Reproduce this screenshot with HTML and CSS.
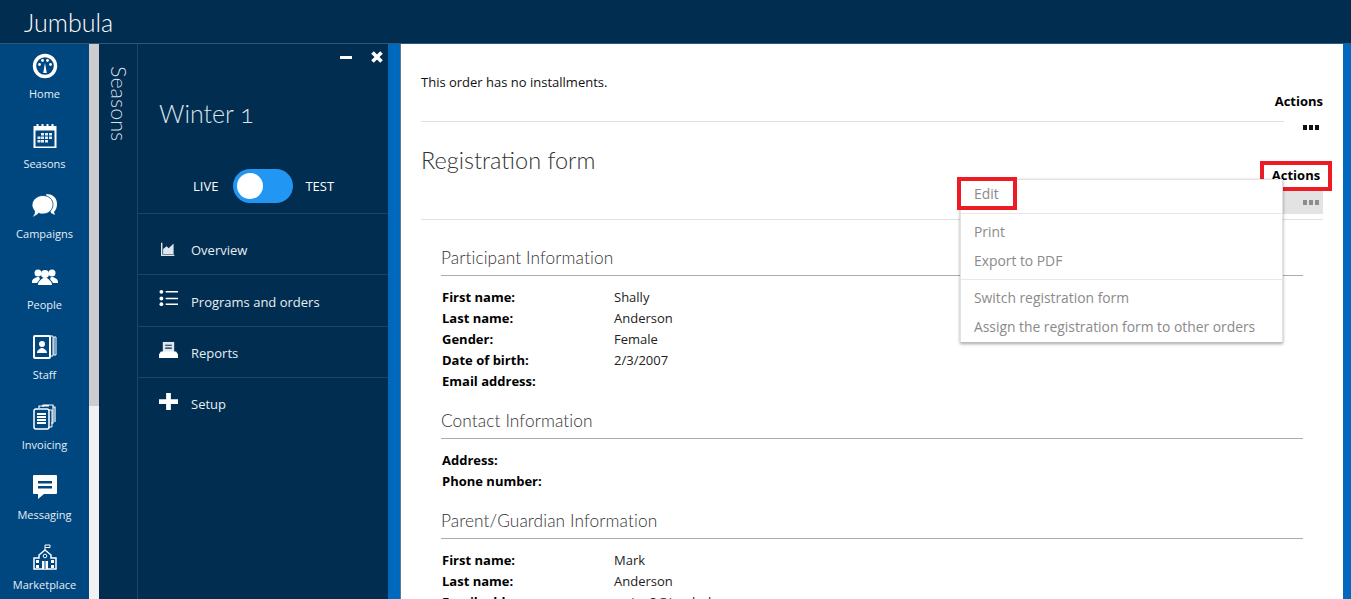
FILE: index.html
```html
<!DOCTYPE html>
<html lang="en">
<head>
<meta charset="utf-8">
<title>Jumbula</title>
<link rel="stylesheet" href="styles.css">
</head>
<body>
<header class="topbar"><span class="brand">Jumbula</span></header>
<div class="shell">
  <nav class="rail">
    <a class="rail-item"><svg class="rail-icon" viewBox="0 0 26 26"><circle cx="13" cy="13" r="10.500" fill="none" stroke="#fff" stroke-width="3.400"/><path d="M13 10l1.800 10h-3.600z" fill="#fff"/><circle cx="7.500" cy="11.500" r="1.400" fill="#fff"/><circle cx="10.500" cy="7.500" r="1.400" fill="#fff"/><circle cx="15.500" cy="7.500" r="1.400" fill="#fff"/><circle cx="18.500" cy="11.500" r="1.400" fill="#fff"/></svg><span>Home</span></a>
    <a class="rail-item"><svg class="rail-icon" viewBox="0 0 26 26"><path d="M1.500 3h3V1h2v2h3V1h2v2h3V1h2v2h3V1h2v2h3v22h-23z" fill="#fff"/><rect x="3.500" y="7.500" width="19" height="16" fill="#00477f"/><path d="M9 10h3v2.500H9zM13 10h3v2.500h-3zM17 10h3v2.500h-3zM5.500 13.500h3V16h-3zM9 13.500h3V16H9zM13 13.500h3V16h-3zM17 13.500h3V16h-3zM5.500 17h3v2.500h-3zM9 17h3v2.500H9zM13 17h3v2.500h-3z" fill="#fff" opacity=".9"/></svg><span>Seasons</span></a>
    <a class="rail-item"><svg class="rail-icon" viewBox="0 0 26 26"><path d="M14 1c6 0 11 3 11 10 0 3-1 6-3 8l1 3-4-2z" fill="#fff"/><path d="M11 2.500c6 0 10 4 10 9s-4 9.500-10 9.500c-2 0-3 0-4-1-2 2-5 4-7 4 2-2 3-4 2.500-6C1 16 0 14 0 12c0-5 5-9.500 11-9.500z" fill="#fff" stroke="#00477f" stroke-width=".8"/></svg><span>Campaigns</span></a>
    <a class="rail-item"><svg class="rail-icon" viewBox="0 0 26 26"><circle cx="6" cy="9" r="3.500" fill="#fff"/><circle cx="20" cy="9" r="3.500" fill="#fff"/><path d="M0 18c0-3 3-4 5-5h2l1 2-3 4H0zM26 18c0-3-3-4-5-5h-2l-1 2 3 4h5z" fill="#fff"/><circle cx="13" cy="10" r="4" fill="#fff"/><path d="M6 21c0-4 4-6 5-7h4c1 1 5 3 5 7z" fill="#fff"/></svg><span>People</span></a>
    <a class="rail-item"><svg class="rail-icon" viewBox="0 0 26 26"><path d="M18 2h3v20h-3zM22 3h2v18h-2z" fill="none" stroke="#fff" stroke-width="1"/><rect x="2" y="2" width="16" height="22" rx="1" fill="none" stroke="#fff" stroke-width="2"/><circle cx="10" cy="10" r="3" fill="#fff"/><path d="M5 19c0-3 3-4 4-5h2c1 1 4 2 4 5z" fill="#fff"/></svg><span>Staff</span></a>
    <a class="rail-item"><svg class="rail-icon" viewBox="0 0 26 26"><path d="M7 4V2h10M11 3V1h10v18h-2M21 3h2v15" fill="none" stroke="#fff" stroke-width="1.200"/><rect x="2" y="5" width="15" height="20" rx="2" fill="none" stroke="#fff" stroke-width="1.500"/><path d="M5 9h9v2H5zM5 12h9v2H5zM5 15h9v2H5zM5 18h9v2H5z" fill="#fff"/><path d="M17 6h3v17h-3" fill="none" stroke="#fff"/></svg><span>Invoicing</span></a>
    <a class="rail-item"><svg class="rail-icon" viewBox="0 0 26 26"><path d="M2 1h22a1 1 0 0 1 1 1v17a1 1 0 0 1-1 1H12l-6 5v-5H2a1 1 0 0 1-1-1V2a1 1 0 0 1 1-1z" fill="#fff"/><path d="M6 7h14v2.500H6zM6 12h14v2.500H6z" fill="#00477f"/></svg><span>Messaging</span></a>
    <a class="rail-item"><svg class="rail-icon" viewBox="0 0 26 26"><path d="M13 7V1h5v2.500h-5" fill="none" stroke="#fff"/><path d="M13 6l6 5v3h5v11H2V14h5v-3z" fill="none" stroke="#fff" stroke-width="1.500"/><circle cx="13" cy="12" r="1.800" fill="none" stroke="#fff"/><path d="M10 17h6v8h-6zM4 16h3v3H4zM19 16h3v3h-3zM4 21h3v3H4zM19 21h3v3h-3z" fill="#fff"/><path d="M13 17v8" stroke="#00477f"/></svg><span>Marketplace</span></a>
  </nav>
  <div class="scrollbar"><div class="scroll-thumb"></div></div>
  <aside class="seasons-tab"><span class="seasons-label">Seasons</span></aside>
  <section class="panel">
    <div class="panel-controls">
      <span class="panel-min"></span>
      <svg class="panel-close" viewBox="0 0 14 14"><path d="M2.500 2.500l9 9M11.500 2.500l-9 9" stroke="#fff" stroke-width="3.600"/></svg>
    </div>
    <h1 class="panel-title">Winter 1</h1>
    <div class="mode">
      <span>LIVE</span>
      <span class="toggle"><span class="knob"></span></span>
      <span>TEST</span>
    </div>
    <ul class="panel-menu">
      <li class="overview"><svg class="menu-icon" viewBox="0 0 20 20"><path d="M1 1v18h18" fill="none" stroke="#dfe6ec" stroke-width="2"/><path d="M3 17v-7l5-4 3 3 7-7v15z" fill="#dfe6ec"/></svg><span>Overview</span></li>
      <li class="programs"><svg class="menu-icon" viewBox="0 0 20 20"><circle cx="2.500" cy="3" r="2" fill="#fff"/><circle cx="2.500" cy="10" r="2" fill="#fff"/><circle cx="2.500" cy="16" r="2" fill="#fff"/><path d="M7 3h13M7 10h13M7 16h13" stroke="#fff" stroke-width="1.600"/></svg><span>Programs and orders</span></li>
      <li><svg class="menu-icon" viewBox="0 0 20 20"><path d="M4 1h12v11H4z" fill="#dfe6ec"/><path d="M6.500 4.500h7M6.500 7.500h7" stroke="#00294d" stroke-width="1.200"/><path d="M2 11h16l2 3v4H0v-4z" fill="#fff"/></svg><span>Reports</span></li>
      <li><svg class="menu-icon" viewBox="0 0 20 20"><path d="M7.500 1h5v6.500H20v5h-7.500V19h-5v-6.500H0v-5h7.500z" fill="#fff"/></svg><span>Setup</span></li>
    </ul>
  </section>
  <div class="strip"></div>
  <main class="content">
    <p class="note">This order has no installments.</p>
    <div class="actions-head"><div class="actions-rule"></div><div class="actions-col"><strong>Actions</strong><span class="dots"><i></i><i></i><i></i></span></div></div>
    <div class="form-head">
      <h2 class="form-title">Registration form</h2>
      <div class="actions-open"><span class="dots muted"><i></i><i></i><i></i></span></div>
      <strong class="actions-flag">Actions</strong>
      <div class="dropdown">
        <div class="drop-group first"><span class="drop-edit">Edit</span></div>
        <div class="drop-group"><span>Print</span><span>Export to PDF</span></div>
        <div class="drop-group"><span>Switch registration form</span><span>Assign the registration form to other orders</span></div>
      </div>
    </div>
    <div class="form-body">
      <h3>Participant Information</h3>
      <dl>
        <dt>First name:</dt><dd>Shally</dd>
        <dt>Last name:</dt><dd>Anderson</dd>
        <dt>Gender:</dt><dd>Female</dd>
        <dt>Date of birth:</dt><dd>2/3/2007</dd>
        <dt>Email address:</dt><dd></dd>
      </dl>
      <h3>Contact Information</h3>
      <dl>
        <dt>Address:</dt><dd></dd>
        <dt>Phone number:</dt><dd></dd>
      </dl>
      <h3>Parent/Guardian Information</h3>
      <dl>
        <dt>First name:</dt><dd>Mark</dd>
        <dt>Last name:</dt><dd>Anderson</dd>
        <dt>Email address:</dt><dd>mring3@jumbula</dd>
      </dl>
    </div>
  </main>
  <div class="edge"></div>
</div>
</body>
</html>
```
FILE: styles.css
```css
* { box-sizing: border-box; }
html, body { margin: 0; height: 599px; overflow: hidden; }
body { font-family: "Open Sans", "Noto Sans", sans-serif; font-size: 13px; color: #111; background: #fff; }

.topbar { height: 44px; background: #002d50; border-bottom: 1px solid #2d5877; display: flex; align-items: center; padding-left: 24px; }
.brand { font-family: "Lato", sans-serif; font-size: 25px; color: #fff; font-weight: 300; }

.shell { display: flex; height: 555px; overflow: hidden; }

.rail { width: 89px; flex: none; background: #00477f; display: flex; flex-direction: column; padding-top: 9px; }
.rail-item { height: 70.2px; flex: none; display: flex; flex-direction: column; align-items: center; color: #e6eef5; font-size: 11px; }
.rail-icon { width: 26px; height: 26px; margin-bottom: 6px; display: block; }
.rail-item span { line-height: 17px; }

.scrollbar { width: 10px; flex: none; background: #f1f1f1; }
.scroll-thumb { height: 362px; background: #cdcdcd; }

.seasons-tab { width: 39px; flex: none; background: #002d50; border-right: 1px solid #1d4666; display: flex; justify-content: center; padding: 22px 0 0 2px; }
.seasons-label { writing-mode: vertical-rl; font-family: "Lato", sans-serif; font-weight: 300; font-size: 21.500px; color: #d5dfe7; height: 80px; }

.panel { width: 250px; flex: none; background: #002d50; color: #e8eef3; }
.panel-controls { display: flex; justify-content: flex-end; align-items: center; gap: 18px; height: 26px; padding-right: 4px; }
.panel-min { width: 12px; height: 3px; background: #fff; }
.panel-close { width: 14px; height: 14px; }
.panel-title { margin: 26px 0 0 21px; font-family: "Lato", sans-serif; font-weight: 300; font-size: 25px; line-height: 34px; color: #dbe4ea; font-variant-numeric: oldstyle-nums; }
.mode { display: flex; align-items: center; padding-left: 55px; margin: 39px 0 10px; height: 34px; color: #fff; font-size: 13px; }
.toggle { width: 60px; height: 34px; margin: 0 12px 0 15px; border-radius: 17px; background: #2196f3; display: flex; align-items: center; padding-left: 4px; }
.knob { width: 26px; height: 26px; border-radius: 50%; background: #fff; }
.panel-menu { list-style: none; margin: 0; padding: 0; border-top: 1px solid #1d4666; }
.panel-menu li { height: 51.500px; border-bottom: 1px solid #1d4666; display: flex; align-items: flex-start; gap: 13px; padding: 17px 0 0 21px; font-size: 13px; line-height: 18px; }
.panel-menu li:last-child { border-bottom: 0; }
.panel-menu li.overview { height: 61px; padding-top: 27px; }
.panel-menu li.programs { padding-top: 18px; }
.menu-icon { width: 19px; height: 19px; flex: none; margin-top: -3px; }
.programs .menu-icon { margin-top: -4px; }
.overview .menu-icon { width: 14px; height: 14px; margin: 1px 3px 0 2px; }

.strip { width: 13px; flex: none; background: #0068bd; border-right: 1px solid #5a7b92; }
.content { flex: 1; min-width: 0; background: #fff; padding: 0 20px; }
.edge { width: 8px; flex: none; background: #0068bd; }

.note { margin: 0; padding-top: 29px; line-height: 18px; }
.actions-head { display: flex; height: 51px; margin-top: -1px; }
.actions-rule { flex: none; width: 863px; height: 32px; border-bottom: 1px solid #e0e0e0; }
.actions-col { flex: 1; min-width: 0; display: flex; flex-direction: column; align-items: flex-end; }
.actions-col strong { line-height: 18px; margin-top: 2px; color: #000; white-space: nowrap; }
.dots { display: flex; gap: 2px; margin: 15px 4px 0 0; }
.dots i { width: 4px; height: 5px; background: #111; display: block; }
.dots.muted i { background: #8c8c8c; }

.form-head { position: relative; height: 79px; border-bottom: 1px solid #e0e0e0; }
.form-title { margin: 0; font-family: "Lato", sans-serif; font-weight: 300; font-size: 23.500px; line-height: 30px; padding-top: 4px; color: #333; box-sizing: content-box; }
.actions-open { position: absolute; right: 0; top: 39px; width: 40px; height: 34px; background: #e3e3e3; display: flex; justify-content: flex-end; align-items: flex-start; }
.actions-open .dots { margin: 20px 4px 0 0; }
.actions-flag { position: absolute; right: -9px; top: 20px; width: 72px; height: 30px; border: 4px solid #ed1c24; background: #fff; color: #000; line-height: 20px; text-align: center; }
.dropdown { position: absolute; left: 539px; top: 38px; width: 323px; height: 164px; background: #fff; border: 1px solid #e2e2e2; border-bottom-color: #bbb; box-shadow: 0 1px 3px rgba(0,0,0,.35); color: #8a8a8a; font-size: 13.850px; }
.drop-group { display: flex; flex-direction: column; padding-left: 13px; border-top: 1px solid #e8e8e8; padding-top: 3px; padding-bottom: 4px; }
.drop-group span { line-height: 29px; }
.drop-group.first { border-top: 0; height: 33px; padding: 0 0 0 13px; }
.drop-edit { position: relative; margin-left: -17px; width: 60px; height: 33px; margin-top: -3px; border: 4px solid #ed1c24; padding-left: 13px; line-height: 25px !important; }
.drop-group:nth-child(2) { height: 66px; }

.form-body { padding: 5px 20px 0; }
.form-body h3 { margin: 0; font-family: "Lato", sans-serif; font-weight: 300; font-size: 17.300px; letter-spacing: .1px; line-height: 24px; padding-top: 21px; padding-bottom: 5px; color: #333; border-bottom: 1px solid #a8adb2; }
.form-body dl { margin: 0 0 -4px; padding: 11px 0 0 1px; display: grid; grid-template-columns: 172px 1fr; grid-auto-rows: 21px; line-height: 21px; }
.form-body dt { font-weight: 700; color: #000; }
.form-body dd { margin: 0; color: #222; }
```
